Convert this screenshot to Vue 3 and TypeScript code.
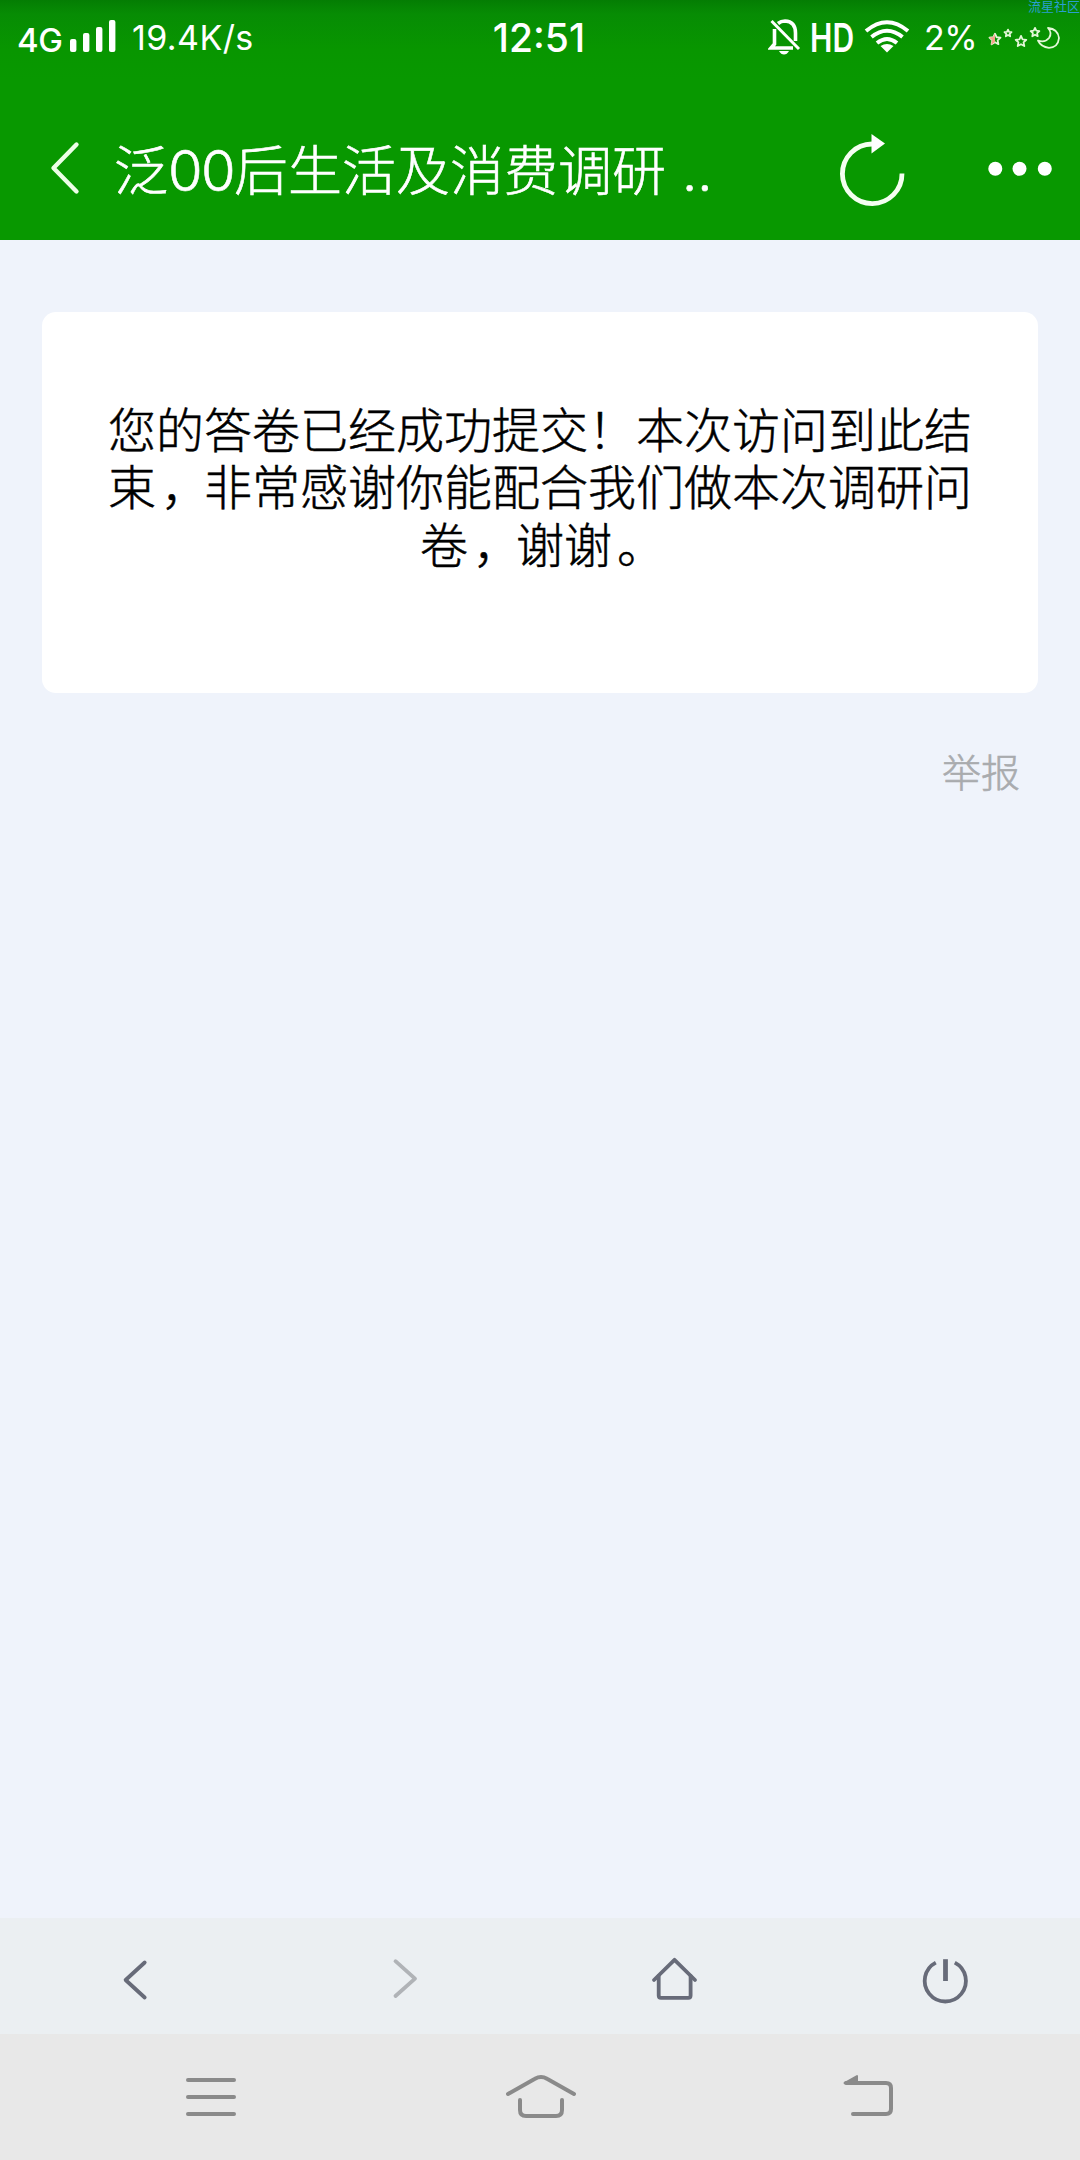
<script setup lang="ts">
import { ref } from 'vue'

const networkSpeed = ref('19.4K/s')
const clock = ref('12:51')
const battery = ref(2)

const signalBars = [
  { x: 0, height: 13 },
  { x: 13, height: 19 },
  { x: 26, height: 25 },
  { x: 39, height: 32 }
]

const messageLines = [
  '您的答卷已经成功提交！本次访问到此结',
  '束，非常感谢你能配合我们做本次调研问',
  '卷，谢谢。'
]

// keep commas and full stops as separate parts so they can be indented in their cell
const splitPunctuation = (line: string) => line.split(/([，。])/).filter(Boolean)
const isPunctuation = (part: string) => part === '，' || part === '。'

// five-pointed outline star around (cx, cy)
const starPoints = (cx: number, cy: number, r: number) =>
  Array.from({ length: 10 }, (_, i) => {
    const radius = i % 2 ? r * 0.48 : r
    const angle = (Math.PI / 5) * i - Math.PI / 2
    return `${(cx + radius * Math.cos(angle)).toFixed(2)},${(cy + radius * Math.sin(angle)).toFixed(2)}`
  }).join(' ')
</script>

<template>
  <div class="screen">
    <header class="header">
      <div class="status-bar">
        <div class="status-left">
          <span class="network">4G</span>
          <svg class="signal" width="46" height="80" viewBox="0 0 46 80">
            <rect
              v-for="bar in signalBars" :key="bar.x"
              :x="bar.x" :y="52 - bar.height" width="6.4" :height="bar.height" rx="2" fill="#fff"
            />
          </svg>
          <span class="speed">{{ networkSpeed }}</span>
        </div>
        <span class="clock">{{ clock }}</span>
        <div class="status-right">
          <svg class="bell" width="34" height="80" viewBox="0 0 34 80">
            <g fill="none" stroke="#fff" stroke-width="3.6">
              <path d="M6.5 29V44L3 48H25" />
              <path d="M10 23.5Q13 21 17 21Q27.5 21.5 27.5 33V41" />
              <path d="M3.5 21L31 49" stroke-width="3" />
            </g>
            <path d="M11 51H21Q19 54.5 16 54.5T11 51Z" fill="#fff" />
          </svg>
          <span class="hd">HD</span>
          <svg class="wifi" width="46" height="80" viewBox="0 0 46 80">
            <g fill="none" stroke="#fff" stroke-width="4">
              <path d="M2 31Q23 13.5 44 31" />
              <path d="M7.5 37Q23 24.5 38.5 37" />
              <path d="M13 43Q23 35 33 43" />
            </g>
            <path d="M16.5 46Q23 42 29.5 46L23 52.5Z" fill="#fff" />
          </svg>
          <span class="battery">{{ battery }}%</span>
          <svg class="night" width="74" height="80" viewBox="0 0 74 80">
            <g fill="none" stroke="#e4f8d8" stroke-width="1.8" stroke-linejoin="round">
              <polygon :points="starPoints(8, 39.5, 5.8)" />
              <polygon :points="starPoints(21, 33.3, 3.7)" />
              <polygon :points="starPoints(34, 41.5, 5.6)" />
              <polygon :points="starPoints(48, 32.5, 4.6)" />
              <path d="M61 28Q71 29 72 38Q71 47.5 62 47.8Q54 47 51 40.5Q58 43 62 38Q65.5 33 61 28Z" />
            </g>
            <path d="M8 33.5V42L4 45L5 40L2 37.5L6 37Z" fill="#f5a58c" />
          </svg>
        </div>
      </div>

      <div class="title-bar">
        <svg class="back" width="114" height="160" viewBox="0 0 114 160">
          <path d="M76.5 64.5L53.5 88L76.5 111.5" fill="none" stroke="#ecffe6" stroke-width="4.4" stroke-linecap="round" stroke-linejoin="round" />
        </svg>
        <h1 class="title">泛<span class="digits">00</span>后生活及消费调研<span class="dots">..</span></h1>
        <svg class="refresh" width="80" height="160" viewBox="0 0 80 160">
          <path d="M72 93.5A29.8 29.8 0 1 1 42 64" fill="none" stroke="#f4fff0" stroke-width="4.8" />
          <path d="M41.5 54L55 63.5L41.5 73.5Z" fill="#fff" />
        </svg>
        <svg class="more" width="100" height="160" viewBox="0 0 100 160">
          <circle cx="15.3" cy="88.8" r="7" fill="#fff" />
          <circle cx="39.5" cy="88.8" r="7" fill="#fff" />
          <circle cx="64.8" cy="88.8" r="7" fill="#fff" />
        </svg>
      </div>
      <span class="watermark">流星社区</span>
    </header>

    <main class="content">
      <section class="card">
        <p class="message">
          <span v-for="line in messageLines" :key="line" class="line"><span
            v-for="(part, i) in splitPunctuation(line)" :key="i"
            :class="{ mark: isPunctuation(part) }"
          >{{ part }}</span></span>
        </p>
      </section>
      <a class="report">举报</a>
    </main>

    <nav class="toolbar">
      <button class="tool" type="button">
        <svg width="64" height="64" viewBox="0 0 64 64">
          <path d="M41.7 18.5L22.6 36L41.7 53.5" />
        </svg>
      </button>
      <button class="tool tool-disabled" type="button">
        <svg width="64" height="64" viewBox="0 0 64 64">
          <path d="M22.5 17.2L42 34.7L22.5 52" />
        </svg>
      </button>
      <button class="tool" type="button">
        <svg width="64" height="64" viewBox="0 0 64 64">
          <path d="M11 36L31.5 15.8L52 36" />
          <path d="M15.7 32V51.5Q15.7 53.8 18 53.8H45.3Q47.6 53.8 47.6 51.5V32" />
        </svg>
      </button>
      <button class="tool" type="button">
        <svg width="64" height="64" viewBox="0 0 64 64">
          <path class="flat" d="M22.8 18.6A20.6 20.6 0 1 0 41.8 18.6" />
          <path class="flat bar" d="M32.5 15.2V37" />
        </svg>
      </button>
    </nav>

    <footer class="system-nav">
      <svg width="80" height="80" viewBox="0 0 80 80">
        <path d="M17 23H63M17 40H63M17 57H63" />
      </svg>
      <svg width="80" height="80" viewBox="0 0 80 80">
        <path d="M8 37L35 21.8Q41 18.2 47 21.8L74 37" />
        <path d="M20 43V53Q20 59 26 59H56Q62 59 62 53V43" />
      </svg>
      <svg width="80" height="80" viewBox="0 0 80 80">
        <path d="M17 26H57Q62 26 62 31V52Q62 57 57 57H24" />
        <path class="wedge" d="M15.5 26L28 19V26Z" />
      </svg>
    </footer>
  </div>
</template>

<style>
body { margin: 0; }
</style>

<style scoped>
.screen {
  display: flex; flex-direction: column;
  width: 1080px; height: 2160px; overflow: hidden;
  background: #eff3fb;
  font-family: Inter, "Noto Sans CJK SC", sans-serif;
}
.header {
  position: relative; height: 240px; color: #fff;
  background: linear-gradient(#047d03 0, #078c04 14px, #089600 50px, #089800 80px);
}
.status-bar {
  display: grid; grid-template-columns: 1fr auto 1fr;
  height: 80px; padding: 0 19px 0 17px; line-height: 76px; white-space: nowrap;
}
.status-left { display: flex; }
.status-right { display: flex; justify-content: flex-end; }
.network { width: 53px; font-size: 33px; font-weight: 500; line-height: 80px; letter-spacing: -0.5px; }
.signal { margin-right: 16px; }
.speed { font-size: 34px; font-weight: 400; letter-spacing: 0.4px; }
.clock { font-size: 39px; font-weight: 450; }
.bell { margin-right: 8px; }
.hd {
  width: 54px; font-size: 39px; font-weight: 600;
  transform: scaleX(0.77); transform-origin: left;
}
.battery { width: 63px; margin-left: 14px; font-size: 34px; letter-spacing: -0.6px; }

.title-bar { display: flex; height: 160px; }
.title {
  flex: 1; margin: 0;
  font-size: 54px; font-weight: 300; line-height: 183px; white-space: nowrap;
  -webkit-text-stroke: 0.6px #fff;
}
.digits { font-size: 56px; letter-spacing: -1.6px; }
.dots { margin-left: 16px; }
.more { margin-left: 70px; }
.watermark {
  position: absolute; top: 0; right: 0;
  font-size: 13px; line-height: 13px; color: #2a9fd0;
}

.content {
  flex: 1; display: flex; flex-direction: column; align-items: flex-end;
  padding: 72px 42px 0;
}
.card {
  box-sizing: border-box; width: 996px; height: 381px; padding-top: 91px;
  border-radius: 14px; background: #fff;
}
.message {
  margin: 0; text-align: center;
  font-family: "Liberation Sans", "Noto Sans CJK SC", sans-serif;
  font-size: 48px; font-weight: 300; line-height: 57.3px; color: #000;
  -webkit-text-stroke: 0.5px #000;
}
.line { display: block; height: 57.3px; white-space: nowrap; }
.mark { display: inline-block; width: 1em; text-align: left; text-indent: 5px; }
.report {
  margin: 51px 18px 0 0;
  font-size: 39px; font-weight: 300; line-height: 58px; color: #a9abae;
  -webkit-text-stroke: 0.6px #a9abae;
}

.toolbar { display: flex; height: 116px; background: #ebeff2; }
.tool {
  flex: 1; display: flex; align-items: center; justify-content: center;
  padding: 0; border: 0; background: none;
}
.tool path {
  fill: none; stroke: #676b79; stroke-width: 3.8;
  stroke-linecap: round; stroke-linejoin: round;
}
.tool-disabled path { stroke: #b0b3b7; }
.tool .flat { stroke-linecap: butt; }
.tool .bar { stroke-width: 4.8; }

.system-nav {
  display: flex; align-items: center; justify-content: space-between;
  box-sizing: border-box; height: 126px; padding: 0 171px; background: #e8e8e8;
}
.system-nav path {
  fill: none; stroke: #8a8a8a; stroke-width: 4;
  stroke-linecap: round; stroke-linejoin: round;
}
.system-nav .wedge { fill: #8a8a8a; stroke-width: 2; }
</style>
